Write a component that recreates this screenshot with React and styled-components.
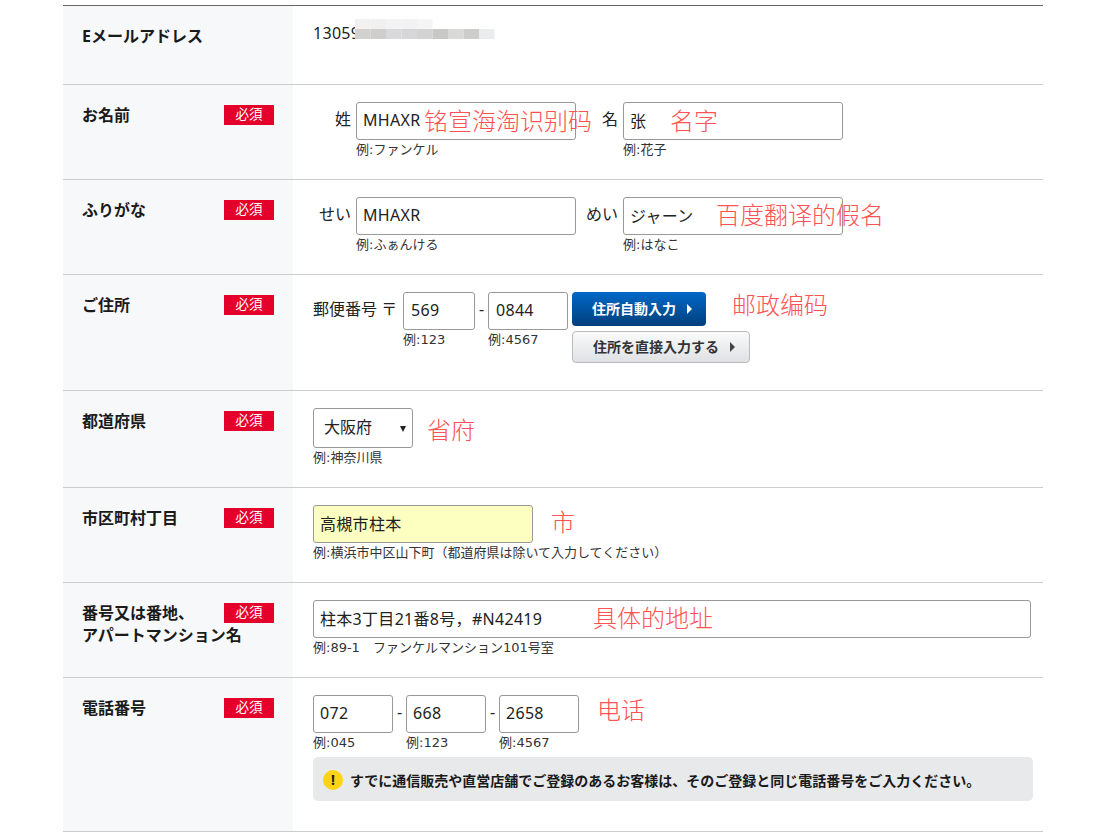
import React from 'react';
import styled, { createGlobalStyle } from 'styled-components';

const GlobalStyle = createGlobalStyle`
  html, body {
    margin: 0;
    background: #fff;
  }
  body {
    font-family: 'Noto Sans', 'Noto Sans CJK JP', 'Noto Sans CJK SC', sans-serif;
    color: #222;
    overflow: hidden;
  }
  * {
    box-sizing: border-box;
  }
`;

const Page = styled.div`
  width: 980px;
  margin: 5px 0 0 63px;
  border-top: 1px solid #666;
`;

const Row = styled.section`
  display: grid;
  grid-template-columns: 230px 1fr;
  min-height: ${props => props.$height}px;
  border-bottom: 1px solid #ccc;
`;

const Head = styled.div`
  padding: 19px 19px 0 20px;
  background: #f7f8fa;
`;

const Label = styled.h3`
  margin: 0 0 0 -1px;
  font-size: 16px;
  line-height: 22px;
  font-weight: 700;
  color: #1a1a1a;
`;

const Badge = styled.span`
  float: right;
  width: 50px;
  height: 20px;
  margin-top: 1px;
  background: #e4002b;
  color: #fff;
  font-size: 13.5px;
  line-height: 19px;
  text-align: center;
`;

const Body = styled.div`
  position: relative;
  padding: 17px 12px 0 20px;
`;

const Email = styled.div`
  position: relative;
  margin-top: -1px;
  font-size: 16px;
  line-height: 22px;
  letter-spacing: 0.3px;
`;

const Mosaic = styled.svg`
  position: absolute;
  left: 42px;
  top: -3px;
`;

const Fields = styled.div`
  display: flex;
  align-items: flex-start;
`;

const FieldLabel = styled.span`
  flex: none;
  width: ${props => props.$width}px;
  padding-right: ${props => props.$pad ?? 5}px;
  font-size: 16px;
  line-height: 35px;
  text-align: ${props => props.$align || 'right'};
  white-space: nowrap;
`;

const Field = styled.div`
  flex: none;
  width: ${props => props.$width}px;
`;

const Input = styled.input`
  display: block;
  width: 100%;
  height: 38px;
  padding: 0 ${props => props.$pad ?? 6}px 2px;
  border: 1px solid #999;
  border-radius: 3px;
  background: ${props => props.$bg || '#fff'};
  color: #222;
  font: inherit;
  font-size: 16px;
  letter-spacing: 0.3px;
`;

const Hint = styled.div`
  padding-top: 1px;
  font-family: 'DejaVu Sans', 'Noto Sans CJK JP', sans-serif;
  font-size: 13px;
  line-height: 18px;
  color: #333;
  white-space: nowrap;
`;

const Dash = styled.span`
  flex: none;
  width: 13px;
  font-size: 16px;
  line-height: 35px;
  text-align: center;
`;

const Buttons = styled.div`
  display: flex;
  flex-direction: column;
  align-items: flex-start;
  gap: 5px;
  margin-left: 4px;
`;

const Button = styled.button`
  display: flex;
  align-items: center;
  justify-content: center;
  gap: 11px;
  width: ${props => (props.$primary ? 134 : 178)}px;
  height: ${props => (props.$primary ? 34 : 32)}px;
  padding: 0 0 3px 6px;
  border: ${props => (props.$primary ? 'none' : '1px solid #bbb')};
  border-radius: 4px;
  background: ${props =>
    props.$primary
      ? 'linear-gradient(#0069c8, #003f7c)'
      : 'linear-gradient(#fafafa, #dfe1e4)'};
  color: ${props => (props.$primary ? '#fff' : '#333')};
  font-family: inherit;
  font-size: 14px;
  font-weight: 700;

  &::after {
    content: '';
    margin-top: 3px;
    border-left: 5px solid ${props => (props.$primary ? '#fff' : '#444')};
    border-top: 5px solid transparent;
    border-bottom: 5px solid transparent;
  }
`;

const SelectBox = styled.div`
  position: relative;
  width: 100px;

  &::after {
    content: '';
    position: absolute;
    right: 7px;
    top: 18px;
    border-top: 6px solid #222;
    border-left: 3px solid transparent;
    border-right: 3px solid transparent;
  }
`;

const Select = styled.select`
  display: block;
  width: 100%;
  height: 40px;
  padding: 0 10px 2px;
  border: 1px solid #999;
  border-radius: 3px;
  background: #fff;
  color: #222;
  font: inherit;
  font-size: 16px;
  appearance: none;
`;

const Notice = styled.div`
  display: flex;
  align-items: center;
  gap: 7px;
  width: 720px;
  height: 44px;
  margin-top: 5px;
  padding: 1px 0 0 10px;
  border-radius: 5px;
  background: #e8e9eb;
  font-size: 14px;
  font-weight: 700;
  color: #1a1a1a;
`;

const NoticeIcon = styled.span`
  flex: none;
  width: 20px;
  height: 20px;
  border-radius: 50%;
  background: #fdd317;
  font-size: 14px;
  line-height: 20px;
  text-align: center;
`;

const Note = styled.span`
  position: absolute;
  left: ${props => props.$left}px;
  top: ${props => props.$top}px;
  color: #ff5252;
  font-family: 'Noto Sans CJK SC', sans-serif;
  font-size: 24px;
  font-weight: 300;
  line-height: 32px;
  white-space: nowrap;
`;

const mosaic = [
  [0, 0, '#f1f1f1'], [15.5, 0, '#f0f0f0'], [31, 0, '#f3f3f3'], [46.5, 0, '#f2f2f2'], [62, 0, '#f5f5f5'],
  [0, 10, '#d2d1cf'], [15.5, 10, '#cfcecc'], [31, 10, '#d9d9db'], [46.5, 10, '#d6d6d8'], [62, 10, '#d3d3d3'],
  [77.5, 10, '#c8c8c6'], [93, 10, '#d9d9d7'], [108.5, 10, '#cdcdcb'], [124, 10, '#ebecee'],
];

export default function App() {
  return (
    <Page>
      <GlobalStyle />

      <Row $height={79}>
        <Head>
          <Label>Eメールアドレス</Label>
        </Head>
        <Body>
          <Email>
            13059
            <Mosaic width="140" height="22" viewBox="0 0 140 22">
              {mosaic.map(([x, y, fill]) => (
                <rect key={`${x}-${y}`} x={x} y={y} width="15.5" height="10" fill={fill} />
              ))}
            </Mosaic>
          </Email>
        </Body>
      </Row>

      <Row $height={95}>
        <Head>
          <Badge>必須</Badge>
          <Label>お名前</Label>
        </Head>
        <Body>
          <Fields>
            <FieldLabel $width={43}>姓</FieldLabel>
            <Field $width={220}>
              <Input readOnly defaultValue="MHAXR" />
              <Hint>例:ファンケル</Hint>
            </Field>
            <FieldLabel $width={47}>名</FieldLabel>
            <Field $width={220}>
              <Input readOnly defaultValue="张" />
              <Hint>例:花子</Hint>
            </Field>
          </Fields>
          <Note $left={131} $top={19}>铭宣海淘识别码</Note>
          <Note $left={377} $top={19}>名字</Note>
        </Body>
      </Row>

      <Row $height={95}>
        <Head>
          <Badge>必須</Badge>
          <Label>ふりがな</Label>
        </Head>
        <Body>
          <Fields>
            <FieldLabel $width={43}>せい</FieldLabel>
            <Field $width={220}>
              <Input readOnly defaultValue="MHAXR" />
              <Hint>例:ふぁんける</Hint>
            </Field>
            <FieldLabel $width={47}>めい</FieldLabel>
            <Field $width={220}>
              <Input readOnly defaultValue="ジャーン" />
              <Hint>例:はなこ</Hint>
            </Field>
          </Fields>
          <Note $left={423} $top={18}>百度翻译的假名</Note>
        </Body>
      </Row>

      <Row $height={116}>
        <Head>
          <Badge>必須</Badge>
          <Label>ご住所</Label>
        </Head>
        <Body>
          <Fields>
            <FieldLabel $width={90} $align="left" $pad={0}>郵便番号 〒</FieldLabel>
            <Field $width={72}>
              <Input readOnly defaultValue="569" $pad={7} />
              <Hint>例:123</Hint>
            </Field>
            <Dash>-</Dash>
            <Field $width={80}>
              <Input readOnly defaultValue="0844" $pad={7} />
              <Hint>例:4567</Hint>
            </Field>
            <Buttons>
              <Button $primary>住所自動入力</Button>
              <Button>住所を直接入力する</Button>
            </Buttons>
          </Fields>
          <Note $left={439} $top={13}>邮政编码</Note>
        </Body>
      </Row>

      <Row $height={97}>
        <Head>
          <Badge>必須</Badge>
          <Label>都道府県</Label>
        </Head>
        <Body>
          <SelectBox>
            <Select defaultValue="大阪府">
              <option>大阪府</option>
            </Select>
          </SelectBox>
          <Hint>例:神奈川県</Hint>
          <Note $left={134} $top={22}>省府</Note>
        </Body>
      </Row>

      <Row $height={95}>
        <Head>
          <Badge>必須</Badge>
          <Label>市区町村丁目</Label>
        </Head>
        <Body>
          <Field $width={220}>
            <Input readOnly defaultValue="高槻市柱本" $bg="#fdffc0" />
          </Field>
          <Hint>例:横浜市中区山下町（都道府県は除いて入力してください）</Hint>
          <Note $left={258} $top={17}>市</Note>
        </Body>
      </Row>

      <Row $height={95}>
        <Head>
          <Badge>必須</Badge>
          <Label>番号又は番地、<br />アパートマンション名</Label>
        </Head>
        <Body>
          <Input readOnly defaultValue="柱本3丁目21番8号，#N42419" />
          <Hint>例:89-1　ファンケルマンション101号室</Hint>
          <Note $left={300} $top={18}>具体的地址</Note>
        </Body>
      </Row>

      <Row $height={154}>
        <Head>
          <Badge>必須</Badge>
          <Label>電話番号</Label>
        </Head>
        <Body>
          <Fields>
            <Field $width={80}>
              <Input readOnly defaultValue="072" />
              <Hint>例:045</Hint>
            </Field>
            <Dash>-</Dash>
            <Field $width={80}>
              <Input readOnly defaultValue="668" />
              <Hint>例:123</Hint>
            </Field>
            <Dash>-</Dash>
            <Field $width={80}>
              <Input readOnly defaultValue="2658" />
              <Hint>例:4567</Hint>
            </Field>
          </Fields>
          <Note $left={304} $top={15}>电话</Note>
          <Notice>
            <NoticeIcon>!</NoticeIcon>
            すでに通信販売や直営店舗でご登録のあるお客様は、そのご登録と同じ電話番号をご入力ください。
          </Notice>
        </Body>
      </Row>
    </Page>
  );
}
